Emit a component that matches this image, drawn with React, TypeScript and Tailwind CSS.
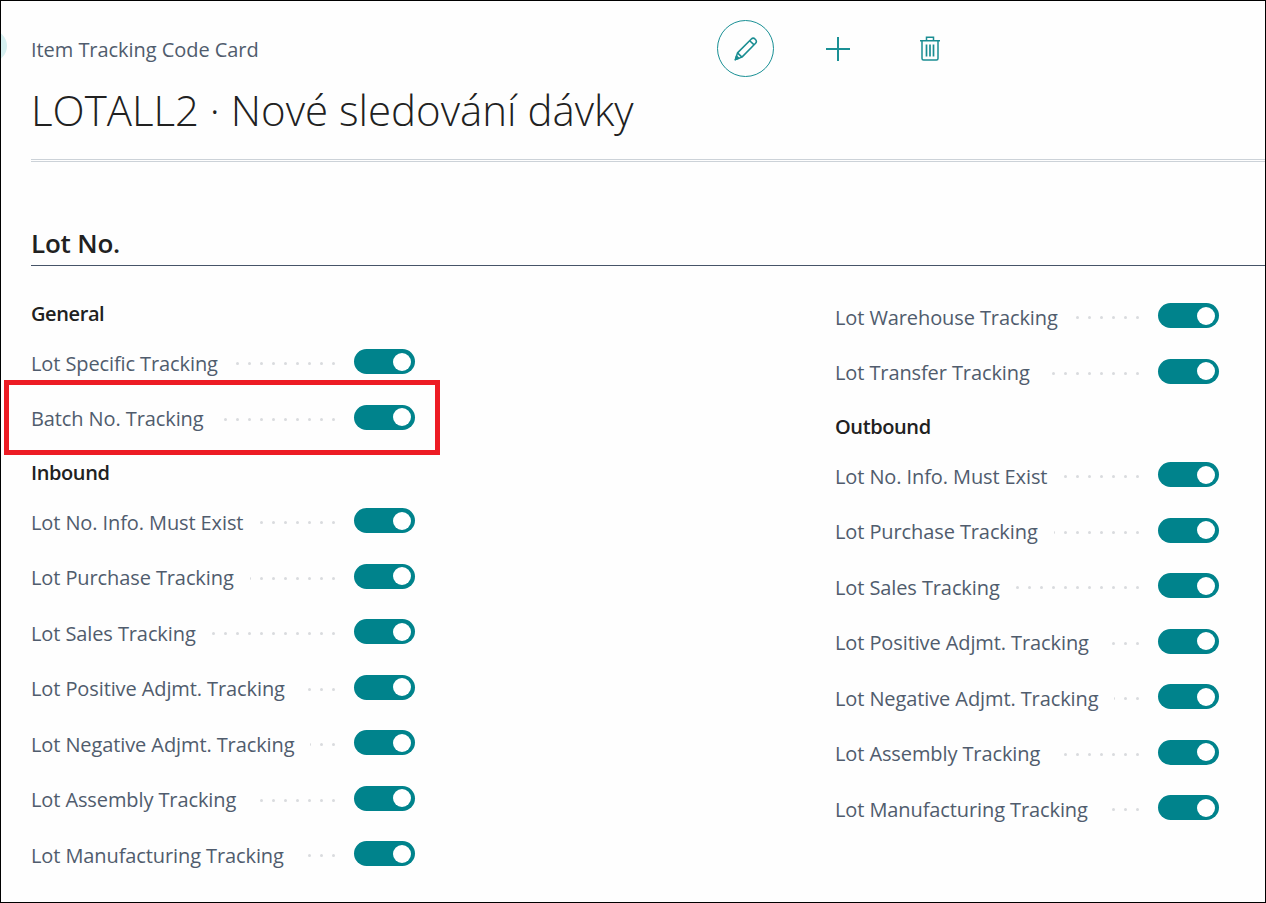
const FONT = "font-['Open_Sans','Noto_Sans',sans-serif]";

function Row({ label }: { label: string }) {
  return (
    <div className="flex h-[55.5px] w-[384px] items-center">
      <span className="whitespace-nowrap pt-[2px] text-[20px] tracking-[-0.1px] text-[#505c6d]">{label}</span>
      <div className="ml-4 mr-[19px] flex min-w-0 flex-1 justify-end gap-[9px] overflow-hidden pt-[2px]">
        {Array.from({ length: 30 }, (_, i) => (
          <span key={i} className="size-[3px] shrink-0 rounded-full bg-[#d9dbde]" />
        ))}
      </div>
      <div className="mb-[2px] flex h-[25px] w-[61px] shrink-0 items-center justify-end rounded-full bg-[#00838c] pr-[4px]">
        <span className="size-[18px] rounded-full bg-white" />
      </div>
    </div>
  );
}

function Heading({ children, top }: { children: string; top?: boolean }) {
  return (
    <div className={`flex h-11 items-center pt-[2px] text-[20px] font-semibold tracking-[-0.4px] text-[#212121] ${top ? "" : "mt-[4px]"}`}>
      {children}
    </div>
  );
}

export default function App() {
  return (
    <div className={`${FONT} relative h-[903px] w-[1266px] overflow-hidden border border-black bg-[#fefefe]`}>
      <div className="absolute -left-[26px] top-[29px] size-[32px] rounded-full bg-[#d5eff0]" />
      <div className="absolute left-[3px] top-[379px] h-[75px] w-[436px] border-[5px] border-[#ed1c24]" />

      <header className="flex pb-[19px] pl-[30px] pt-[19px]">
        <div className="w-[686px]">
          <div className="flex h-[60px] items-center text-[20px] tracking-[-0.05px] text-[#505c6d]">Item Tracking Code Card</div>
          <h1 className="-mt-px whitespace-nowrap text-[42px] font-light leading-[62px] text-[#212121]">LOTALL2 · Nové sledování dávky</h1>
        </div>
        <div className="flex h-[57px] items-center">
          <button className="flex size-[57px] items-center justify-center rounded-full border border-[#1a9095]">
            <svg width="24" height="24" viewBox="0 0 26 26" fill="none" stroke="#1a8d92" strokeWidth="1.7" strokeLinejoin="round">
              <path d="M1.5 24.5 L3.8 17.2 L18.8 2.2 C20 1 21.6 1 23 2.4 C24.6 4 24.6 5.6 23.4 6.8 L8.6 21.8 Z" />
              <path d="M3.8 17.2 L8.6 21.8 M17 4 L21.8 8.6" />
              <path d="M1.5 24.5 L2.7 20.6 L5.2 23 Z" fill="#1a8d92" />
            </svg>
          </button>
          <svg className="ml-[52px]" width="24" height="24" viewBox="0 0 24 24" stroke="#1a9095" strokeWidth="2">
            <path d="M0 12 H24 M12 0 V24" />
          </svg>
          <svg className="ml-[70px]" width="20" height="25" viewBox="0 0 20 25" fill="none" stroke="#1a8d92" strokeWidth="1.5">
            <path d="M0 4.7 H20 M6.5 4.5 V1.2 H13.5 V4.5" />
            <path d="M2 5 V22.5 C2 23.5 2.6 24 3.5 24 H16.5 C17.4 24 18 23.5 18 22.5 V5" />
            <path d="M6.5 8.5 V20.5 M10 8.5 V20.5 M13.5 8.5 V20.5" strokeWidth="1.7" />
          </svg>
        </div>
      </header>

      <div className="ml-[30px] mt-[-1px] h-[3px] border-y border-[#ccd2d8]" />

      <section className="mt-[60px] pl-[30px]">
        <h2 className="flex h-[44px] items-center border-b border-[#465468] pb-[1px] text-[26px] font-semibold tracking-[-0.2px] text-[#212121]">Lot No.</h2>
      </section>

      <div className="flex pl-[30px]">
        <div className="w-[804px] pt-[25px]">
          <Heading top>General</Heading>
          <Row label="Lot Specific Tracking" />
          <Row label="Batch No. Tracking" />
          <Heading>Inbound</Heading>
          <Row label="Lot No. Info. Must Exist" />
          <Row label="Lot Purchase Tracking" />
          <Row label="Lot Sales Tracking" />
          <Row label="Lot Positive Adjmt. Tracking" />
          <Row label="Lot Negative Adjmt. Tracking" />
          <Row label="Lot Assembly Tracking" />
          <Row label="Lot Manufacturing Tracking" />
        </div>
        <div className="pt-[23px]">
          <Row label="Lot Warehouse Tracking" />
          <Row label="Lot Transfer Tracking" />
          <Heading>Outbound</Heading>
          <Row label="Lot No. Info. Must Exist" />
          <Row label="Lot Purchase Tracking" />
          <Row label="Lot Sales Tracking" />
          <Row label="Lot Positive Adjmt. Tracking" />
          <Row label="Lot Negative Adjmt. Tracking" />
          <Row label="Lot Assembly Tracking" />
          <Row label="Lot Manufacturing Tracking" />
        </div>
      </div>
    </div>
  );
}
